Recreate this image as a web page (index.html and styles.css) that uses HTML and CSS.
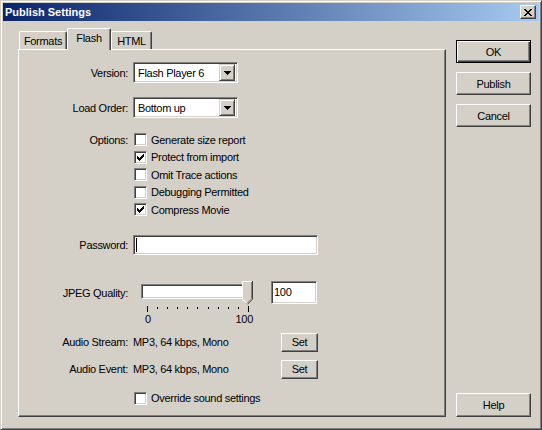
FILE: index.html
```html
<!DOCTYPE html>
<html>
<head>
<meta charset="utf-8">
<link rel="stylesheet" href="styles.css">
</head>
<body>
<div class="window">
  <div class="titlebar">
    <span class="title">Publish Settings</span>
    <span class="close">
      <svg width="8" height="7" viewBox="0 0 8 7">
        <rect x="0" y="0" width="2" height="1"/><rect x="6" y="0" width="2" height="1"/>
        <rect x="1" y="1" width="2" height="1"/><rect x="5" y="1" width="2" height="1"/>
        <rect x="2" y="2" width="4" height="1"/>
        <rect x="3" y="3" width="2" height="1"/>
        <rect x="2" y="4" width="4" height="1"/>
        <rect x="1" y="5" width="2" height="1"/><rect x="5" y="5" width="2" height="1"/>
        <rect x="0" y="6" width="2" height="1"/><rect x="6" y="6" width="2" height="1"/>
      </svg>
    </span>
  </div>
  <div class="body">
    <div class="tabs-area">
      <div class="tabstrip">
        <div class="tab t-formats">Formats</div>
        <div class="tab t-flash selected">Flash</div>
        <div class="tab t-html">HTML</div>
      </div>
      <div class="panel">
        <div class="row r-version">
          <span class="lbl">Version:</span>
          <div class="combo"><span class="combo-text">Flash Player 6</span>
            <span class="drop"><svg width="7" height="4" viewBox="0 0 7 4"><rect x="0" y="0" width="7" height="1"/><rect x="1" y="1" width="5" height="1"/><rect x="2" y="2" width="3" height="1"/><rect x="3" y="3" width="1" height="1"/></svg></span>
          </div>
        </div>
        <div class="row r-order">
          <span class="lbl">Load Order:</span>
          <div class="combo"><span class="combo-text">Bottom up</span>
            <span class="drop"><svg width="7" height="4" viewBox="0 0 7 4"><rect x="0" y="0" width="7" height="1"/><rect x="1" y="1" width="5" height="1"/><rect x="2" y="2" width="3" height="1"/><rect x="3" y="3" width="1" height="1"/></svg></span>
          </div>
        </div>
        <div class="options">
          <div class="opt-lbl-col"><span class="lbl opt-lbl">Options:</span></div>
          <div class="opt-list">
            <div class="opt-row"><span class="cb"></span><span class="opt-text">Generate size report</span></div>
            <div class="opt-row"><span class="cb"><svg width="13" height="13" viewBox="0 0 13 13"><rect x="3" y="5" width="1" height="3"/><rect x="4" y="6" width="1" height="3"/><rect x="5" y="7" width="1" height="3"/><rect x="6" y="6" width="1" height="3"/><rect x="7" y="5" width="1" height="3"/><rect x="8" y="4" width="1" height="3"/><rect x="9" y="3" width="1" height="3"/></svg></span><span class="opt-text">Protect from import</span></div>
            <div class="opt-row"><span class="cb"></span><span class="opt-text">Omit Trace actions</span></div>
            <div class="opt-row"><span class="cb"></span><span class="opt-text">Debugging Permitted</span></div>
            <div class="opt-row"><span class="cb"><svg width="13" height="13" viewBox="0 0 13 13"><rect x="3" y="5" width="1" height="3"/><rect x="4" y="6" width="1" height="3"/><rect x="5" y="7" width="1" height="3"/><rect x="6" y="6" width="1" height="3"/><rect x="7" y="5" width="1" height="3"/><rect x="8" y="4" width="1" height="3"/><rect x="9" y="3" width="1" height="3"/></svg></span><span class="opt-text">Compress Movie</span></div>
          </div>
        </div>
        <div class="row r-password">
          <span class="lbl">Password:</span>
          <div class="field pw"><span class="caret"></span></div>
        </div>
        <div class="jpeg-row">
          <span class="lbl jpeg-lbl">JPEG Quality:</span>
          <div class="slider">
            <div class="track-area">
              <div class="channel"></div>
              <svg class="thumb" width="11" height="24" viewBox="0 0 11 24">
                <polygon points="0,0 11,0 11,18 5.5,23.5 0,18" fill="#d4d0c8"/>
                <polyline points="0.5,18 0.5,0.5 10,0.5" fill="none" stroke="#fff"/>
                <polyline points="10.5,0 10.5,18.2 5.5,23.2 5,22.7" fill="none" stroke="#404040"/>
                <polyline points="9.5,1 9.5,17.8 5.5,21.8" fill="none" stroke="#808080"/>
                <polyline points="0.5,18 5,22.5" fill="none" stroke="#fff"/>
              </svg>
            </div>
            <svg class="ticks" width="112" height="6" viewBox="0 0 112 6">
              <g stroke="#000" stroke-width="1">
                <line x1="6.5" y1="0" x2="6.5" y2="6"/>
                <line x1="16.5" y1="1" x2="16.5" y2="3"/>
                <line x1="26.5" y1="1" x2="26.5" y2="3"/>
                <line x1="36.5" y1="1" x2="36.5" y2="3"/>
                <line x1="46.5" y1="1" x2="46.5" y2="3"/>
                <line x1="56.5" y1="1" x2="56.5" y2="3"/>
                <line x1="67.5" y1="1" x2="67.5" y2="3"/>
                <line x1="77.5" y1="1" x2="77.5" y2="3"/>
                <line x1="87.5" y1="1" x2="87.5" y2="3"/>
                <line x1="97.5" y1="1" x2="97.5" y2="3"/>
                <line x1="107.5" y1="0" x2="107.5" y2="6"/>
              </g>
            </svg>
            <div class="scale"><span>0</span><span>100</span></div>
          </div>
          <div class="field quality">100</div>
        </div>
        <div class="row r-stream">
          <span class="lbl">Audio Stream:</span>
          <span class="value">MP3, 64 kbps, Mono</span>
          <span class="btn set">Set</span>
        </div>
        <div class="row r-event">
          <span class="lbl">Audio Event:</span>
          <span class="value">MP3, 64 kbps, Mono</span>
          <span class="btn set">Set</span>
        </div>
        <div class="opt-row override"><span class="cb"></span><span class="opt-text">Override sound settings</span></div>
      </div>
    </div>
    <div class="buttons">
      <span class="btn default">OK</span>
      <span class="btn side">Publish</span>
      <span class="btn side">Cancel</span>
      <span class="btn side help">Help</span>
    </div>
  </div>
</div>
</body>
</html>
```
FILE: styles.css
```css
* { box-sizing: border-box; }
html, body { margin: 0; padding: 0; background: #d4d0c8; }
body {
  font-family: "Liberation Sans", Arial, sans-serif;
  font-size: 11px;
  letter-spacing: -0.3px;
  color: #000;
}
.window {
  width: 542px;
  height: 430px;
  background: #d4d0c8;
  border: 1px solid;
  border-color: #d4d0c8 #404040 #404040 #d4d0c8;
  box-shadow: inset 1px 1px #fff, inset -1px -1px #808080;
  padding: 2px;
  display: flex;
  flex-direction: column;
}
.titlebar {
  height: 18px;
  display: flex;
  align-items: center;
  padding-left: 2px;
  background: linear-gradient(to right, #0a246a, #a6caf0);
}
.title {
  color: #fff;
  font-weight: bold;
  letter-spacing: 0;
  font-size: 11px;
}
.close {
  margin-left: auto;
  margin-right: 3px;
  width: 16px;
  height: 14px;
  background: #d4d0c8;
  border: 1px solid;
  border-color: #fff #404040 #404040 #fff;
  box-shadow: inset -1px -1px #808080;
  display: flex;
  align-items: center;
  justify-content: center;
  padding-right: 1px;
}
.close svg { display: block; fill: #000; }
.body {
  flex: 1;
  display: flex;
  padding: 7px 0 10px 15px;
}
.tabs-area {
  width: 428px;
  display: flex;
  flex-direction: column;
}
.tabstrip {
  height: 21px;
  display: flex;
  align-items: flex-end;
  padding-left: 1px;
}
.tab {
  height: 18px;
  background: #d4d0c8;
  border-top: 1px solid #fff;
  border-left: 1px solid #fff;
  border-right: 1px solid #404040;
  box-shadow: inset -1px 0 #808080;
  border-radius: 2px 2px 0 0;
  display: flex;
  align-items: center;
  justify-content: center;
  padding-top: 1px;
}
.t-formats { width: 48px; }
.t-flash { width: 44px; }
.t-html { width: 41px; }
.tab.selected {
  height: 22px;
  margin-bottom: -1px;
  position: relative;
  z-index: 2;
  padding-top: 0;
  padding-bottom: 3px;
}
.panel {
  flex: 1;
  border: 1px solid;
  border-color: #fff #404040 #404040 #fff;
  box-shadow: inset -1px -1px #808080;
  padding-top: 12px;
  display: flex;
  flex-direction: column;
}
.row {
  display: flex;
  align-items: center;
  height: 21px;
}
.lbl {
  width: 109px;
  text-align: right;
  margin-right: 5px;
  flex: none;
}
.r-order { margin-top: 14px; }
.combo {
  width: 105px;
  height: 21px;
  background: #fff;
  border: 1px solid;
  border-color: #808080 #fff #fff #808080;
  box-shadow: inset 1px 1px #404040, inset -1px -1px #d4d0c8;
  display: flex;
  align-items: center;
  padding: 2px;
}
.combo-text { padding-left: 2px; flex: 1; }
.drop {
  width: 16px;
  height: 17px;
  background: #d4d0c8;
  border: 1px solid;
  border-color: #d4d0c8 #404040 #404040 #d4d0c8;
  box-shadow: inset 1px 1px #fff, inset -1px -1px #808080;
  display: flex;
  align-items: center;
  justify-content: center;
}
.drop svg { display: block; fill: #000; }
.options {
  display: flex;
  margin-top: 13px;
}
.opt-lbl-col { flex: none; }
.opt-lbl { display: flex; align-items: center; justify-content: flex-end; height: 17.5px; margin-right: 6px; }
.opt-row {
  display: flex;
  align-items: center;
  height: 17.5px;
}
.cb {
  width: 13px;
  height: 13px;
  flex: none;
  background: #fff;
  border: 1px solid;
  border-color: #808080 #fff #fff #808080;
  box-shadow: inset 1px 1px #404040, inset -1px -1px #d4d0c8;
  position: relative;
}
.cb svg { display: block; margin: -1px; fill: #000; }
.opt-text { margin-left: 4px; }
.r-password { margin-top: 16px; height: 20px; }
.field {
  background: #fff;
  border: 1px solid;
  border-color: #808080 #fff #fff #808080;
  box-shadow: inset 1px 1px #404040, inset -1px -1px #d4d0c8;
}
.pw {
  width: 185px;
  height: 20px;
  display: flex;
  align-items: center;
  padding-left: 2px;
}
.caret { width: 1px; height: 14px; background: #000; }
.jpeg-row {
  display: flex;
  margin-top: 26px;
}
.jpeg-lbl { height: 23px; display: flex; align-items: center; justify-content: flex-end; padding-top: 2px; }
.slider {
  width: 112px;
  margin-left: 8px;
  display: flex;
  flex-direction: column;
}
.track-area {
  height: 23px;
  position: relative;
}
.channel {
  margin-top: 3px;
  width: 108px;
  height: 15px;
  background: #fff;
  border: 1px solid;
  border-color: #808080 #fff #fff #808080;
  box-shadow: inset 1px 1px #404040, inset -1px -1px #d4d0c8;
}
.thumb { position: absolute; right: 0; top: 0; display: block; }
.ticks { display: block; margin-top: 2px; }
.scale {
  height: 12px;
  line-height: 12px;
  margin-top: 1px;
  display: flex;
  justify-content: space-between;
  padding-left: 4px;
}
.quality {
  width: 46px;
  height: 23px;
  margin-left: 18px;
  padding: 3px 0 0 2px;
  line-height: 14px;
}
.value { width: 148px; flex: none; }
.btn {
  background: #d4d0c8;
  border: 1px solid;
  border-color: #fff #404040 #404040 #fff;
  box-shadow: inset -1px -1px #808080;
  display: flex;
  align-items: center;
  justify-content: center;
}
.set { width: 37px; height: 19px; }
.r-stream { margin-top: 8px; height: 19px; }
.r-event { margin-top: 8px; height: 19px; }
.override { margin-top: 11px; padding-left: 115px; }
.buttons {
  width: 75px;
  margin-left: 10px;
  padding-top: 12px;
  display: flex;
  flex-direction: column;
}
.btn.default {
  height: 23px;
  border: 1px solid #000;
  box-shadow: inset 1px 1px #fff, inset -1px -1px #404040, inset -2px -2px #808080;
}
.side { height: 23px; margin-top: 9px; }
.help { margin-top: auto; height: 24px; }
```
